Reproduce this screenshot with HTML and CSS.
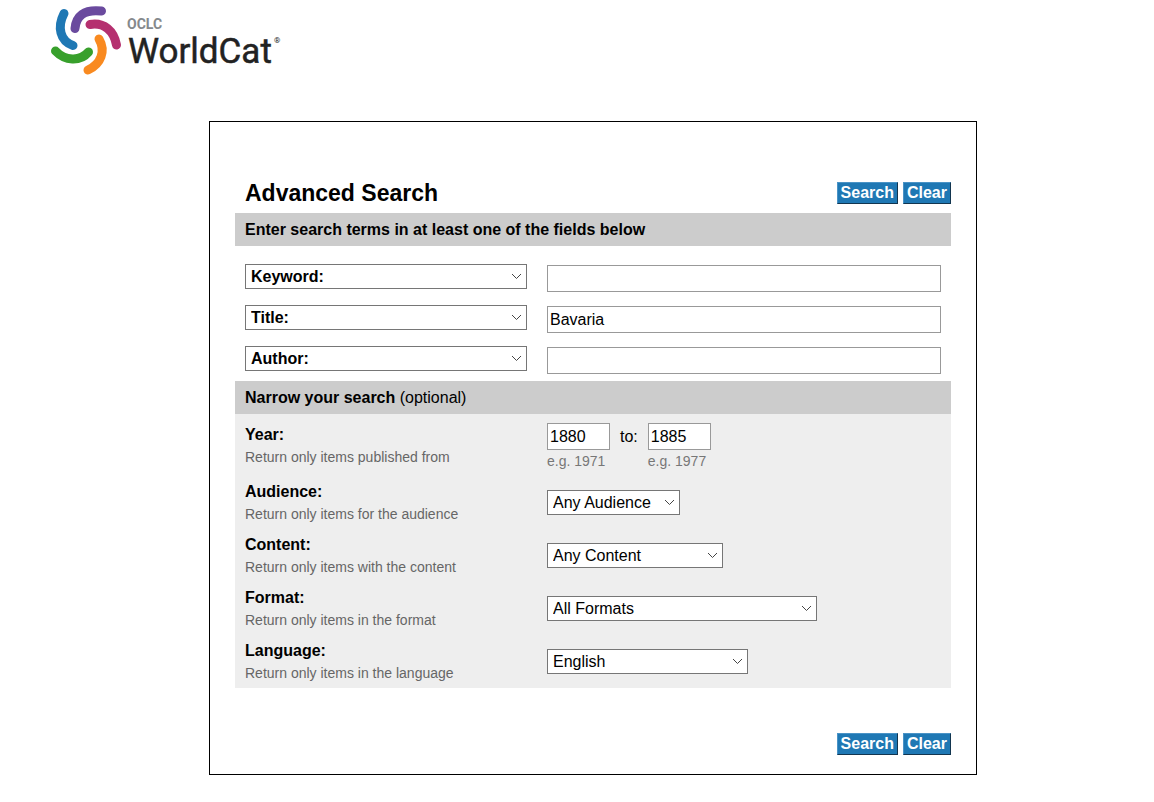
FILE: index.html
```
<!DOCTYPE html>
<html lang="en">
<head>
    <meta charset="utf-8">
    <title>WorldCat Advanced Search</title>
    <link rel="stylesheet" href="styles.css">
</head>
<body>
    <header class="site-header">
        <svg class="logo" width="240" height="80" viewBox="48 0 240 80" role="img" aria-label="OCLC WorldCat">
            <g fill="none" stroke-width="9" stroke-linecap="round">
                <path stroke="#1f78b4" d="M64 13.5C57 27 60 41 73 45.5"/>
                <path stroke="#6a4a9e" d="M101.500 11C84 9 76 16 75 28.5"/>
                <path stroke="#b5306f" d="M90 24.5C104 22 114 31 116.500 45"/>
                <path stroke="#f98a20" d="M99 39C106 51 101 64 88 70"/>
                <path stroke="#38a02c" d="M55.500 51C65 61 80 62 88.500 52"/>
            </g>
            <text class="logo-org" x="127" y="29">OCLC</text>
            <text class="logo-name" x="128" y="63">WorldCat</text>
            <text class="logo-reg" x="274" y="43">®</text>
        </svg>
    </header>

    <main class="page">
        <form class="search-box">
            <div class="title-row">
                <h1>Advanced Search</h1>
                <div class="buttons">
                    <button type="submit">Search</button>
                    <button type="reset">Clear</button>
                </div>
            </div>

            <h2 class="bar">Enter search terms in at least one of the fields below</h2>
            <div class="terms">
                <div class="row">
                    <select class="index" aria-label="First index"><option>Keyword:</option></select>
                    <input type="text" aria-label="First search term">
                </div>
                <div class="row">
                    <select class="index" aria-label="Second index"><option>Title:</option></select>
                    <input type="text" aria-label="Second search term" value="Bavaria">
                </div>
                <div class="row">
                    <select class="index" aria-label="Third index"><option>Author:</option></select>
                    <input type="text" aria-label="Third search term">
                </div>
            </div>

            <h2 class="bar">Narrow your search <span class="optional">(optional)</span></h2>
            <div class="limits">
                <div class="row">
                    <div>
                        <label class="name" for="year-from">Year:</label>
                        <p class="help">Return only items published from</p>
                    </div>
                    <div class="years">
                        <div>
                            <input type="text" id="year-from" class="year" value="1880">
                            <p class="hint">e.g. 1971</p>
                        </div>
                        <label class="to" for="year-to">to:</label>
                        <div>
                            <input type="text" id="year-to" class="year" value="1885">
                            <p class="hint">e.g. 1977</p>
                        </div>
                    </div>
                </div>
                <div class="row">
                    <div>
                        <label class="name" for="audience">Audience:</label>
                        <p class="help">Return only items for the audience</p>
                    </div>
                    <select id="audience" class="limit audience"><option>Any Audience</option></select>
                </div>
                <div class="row">
                    <div>
                        <label class="name" for="content">Content:</label>
                        <p class="help">Return only items with the content</p>
                    </div>
                    <select id="content" class="limit content"><option>Any Content</option></select>
                </div>
                <div class="row">
                    <div>
                        <label class="name" for="format">Format:</label>
                        <p class="help">Return only items in the format</p>
                    </div>
                    <select id="format" class="limit format"><option>All Formats</option></select>
                </div>
                <div class="row">
                    <div>
                        <label class="name" for="language">Language:</label>
                        <p class="help">Return only items in the language</p>
                    </div>
                    <select id="language" class="limit language"><option>English</option></select>
                </div>
            </div>

            <div class="buttons bottom">
                <button type="submit">Search</button>
                <button type="reset">Clear</button>
            </div>
        </form>
    </main>
</body>
</html>
```

FILE: styles.css
```
* { box-sizing: border-box; }
body { margin: 0; background: #fff; color: #000; font: 16px/22px Arial, "Liberation Sans", sans-serif; }
h1, h2, p { margin: 0; }

.site-header { padding-left: 48px; }
.logo { display: block; }
.logo-org { font: bold 14px Roboto, sans-serif; fill: #85898c; }
.logo-name { font: 35px Roboto, sans-serif; fill: #222; stroke: #222; stroke-width: 0.5; }
.logo-reg { font: 8px Roboto, sans-serif; fill: #222; }

.page { padding: 41px 0 27px 32px; }
.search-box { max-width: 768px; margin: 0 auto; padding: 60px 25px 19px; border: 1px solid #000; }

.title-row { display: flex; justify-content: space-between; padding: 0 0 9px 10px; }
h1 { font-size: 23px; line-height: 22px; }
.bar { padding: 0 10px; background: #ccc; font-size: 16px; line-height: 33px; }
.optional { font-weight: normal; }

.buttons { display: flex; justify-content: flex-end; gap: 5px; }
.bottom { margin-top: 45px; }
button { height: 22px; padding: 0 3px; border: 1px solid; border-color: #4a93c6 #12354f #12354f #4a93c6; background: #1f78b4; color: #fff; font: bold 16px/20px Arial, "Liberation Sans", sans-serif; cursor: pointer; }

.row { display: grid; grid-template-columns: 282px 1fr; column-gap: 20px; align-items: start; }
.terms { display: grid; row-gap: 13px; padding: 18px 10px 7px; }
.limits { display: grid; row-gap: 7px; padding: 9px 10px 3px; background: #eee; }

input, select { margin: 0; border-radius: 0; background-color: #fff; color: #000; font: 16px Arial, "Liberation Sans", sans-serif; }
input { width: 100%; height: 27px; padding: 0 2px; border: 1px solid #999; }
.terms input { margin-top: 1px; }
select { appearance: none; height: 25px; padding: 0 20px 1px 5px; border: 1px solid #767676; background-image: url("data:image/svg+xml,%3Csvg xmlns='http://www.w3.org/2000/svg' width='11' height='7'%3E%3Cpath d='M1 1l4.5 4.5L10 1' fill='none' stroke='%23444'/%3E%3C/svg%3E"); background-repeat: no-repeat; background-position: right 4px center; }
.index { width: 100%; font-weight: bold; }
.limit { margin-top: 10px; }
.audience { width: 133px; }
.content { width: 176px; }
.format { width: 270px; }
.language { width: 201px; }

.name { display: block; font-weight: bold; line-height: 24px; }
.help { padding-bottom: 2px; color: #666; font-size: 14px; line-height: 20px; }
.years { display: flex; }
.year { display: block; width: 63px; }
.to { margin: 0 10px; line-height: 27px; }
.hint { color: #777; font-size: 14px; line-height: 23px; }
```
